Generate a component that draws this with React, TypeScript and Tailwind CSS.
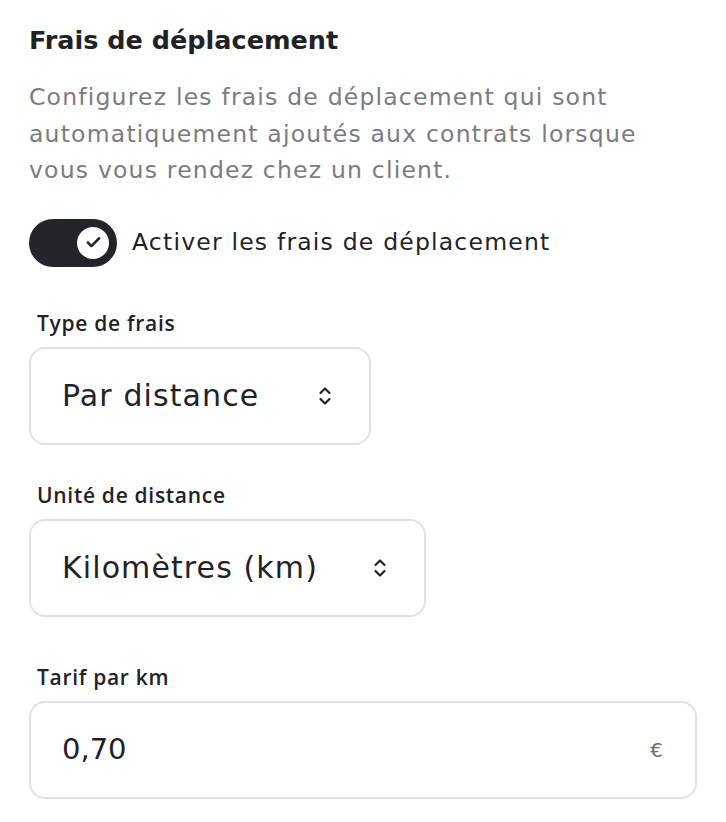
import { Check } from "lucide-react";

function UpDown() {
    return (
        <svg width="14" height="22" viewBox="0 0 14 22" fill="none" stroke="#1f2328" strokeWidth="2.2" strokeLinecap="round" strokeLinejoin="round">
            <path d="M2.5 8 L7 3.5 L11.5 8" />
            <path d="M2.5 14 L7 18.5 L11.5 14" />
        </svg>
    );
}

function Field({ label, children, className = "" }: { label: string; children: React.ReactNode; className?: string }) {
    return (
        <div className={`flex flex-col ${className}`}>
            <label className="pl-[8px] font-['Open_Sans',sans-serif] text-[21px] leading-[24px] font-semibold tracking-[0.7px] text-[#1f2328]">
                {label}
            </label>
            <div className="mt-[12px]">{children}</div>
        </div>
    );
}

function SelectBox({ value, width }: { value: string; width: string }) {
    return (
        <div className={`${width} h-[98px] flex items-center justify-between rounded-[16px] border-2 border-[#e2e2e2] bg-white pl-[31px] pr-[37px]`}>
            <span className="text-[30px] tracking-[1.1px] text-[#1f2328]">{value}</span>
            <UpDown />
        </div>
    );
}

export default function App() {
    return (
        <div className="min-h-screen bg-white font-['DejaVu_Sans',sans-serif] px-[29px] pt-[22px]">
            <h2 className="text-[25.5px] leading-[36px] font-bold text-[#1f2328]">Frais de déplacement</h2>

            <p className="mt-[21px] text-[23.5px] leading-[36.5px] tracking-[1.2px] text-[#7b7b80]">
                Configurez les frais de déplacement qui sont automatiquement ajoutés aux contrats lorsque vous vous rendez chez un client.
            </p>

            <div className="mt-[30px] flex items-center gap-[15px]">
                <div className="w-[88px] h-[48px] rounded-full bg-[#212529] flex items-center justify-end pr-[8px]">
                    <div className="w-[32px] h-[32px] rounded-full bg-white flex items-center justify-center">
                        <Check className="w-[17px] h-[17px] text-[#212529]" strokeWidth={3.5} />
                    </div>
                </div>
                <span className="text-[23.5px] tracking-[1.2px] text-[#1f2328]">Activer les frais de déplacement</span>
            </div>

            <div className="mt-[44px] flex flex-col">
                <Field label="Type de frais">
                    <SelectBox value="Par distance" width="w-[342px]" />
                </Field>
                <Field label="Unité de distance" className="mt-[38px]">
                    <SelectBox value="Kilomètres (km)" width="w-[397px]" />
                </Field>
                <Field label="Tarif par km" className="mt-[48px]">
                    <div className="w-[668px] h-[98px] flex items-center justify-between rounded-[16px] border-2 border-[#e2e2e2] bg-white pl-[31px] pr-[32px]">
                        <span className="text-[29px] text-[#1f2328]">0,70</span>
                        <span className="text-[20px] text-[#6e6e73]">€</span>
                    </div>
                </Field>
            </div>
        </div>
    );
}
